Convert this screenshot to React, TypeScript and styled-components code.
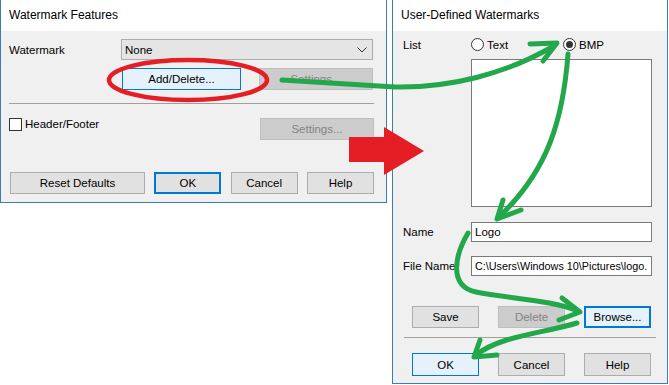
import styled, { createGlobalStyle, css } from 'styled-components'

const GlobalStyle = createGlobalStyle`
  html, body {
    margin: 0;
    padding: 0;
    background: #ffffff;
  }
  body {
    font-family: "Liberation Sans", Arial, sans-serif;
    font-size: 11.5px;
    color: #000;
  }
`

type Variant = 'normal' | 'default' | 'hover' | 'focus' | 'disabled'

const Page = styled.div`
  position: relative;
  width: 669px;
  height: 385px;
  overflow: hidden;
  display: flex;
  align-items: flex-start;
  gap: 5px;
`

const Dialog = styled.section<{ $width: number; $height: number }>`
  box-sizing: border-box;
  width: ${(p) => p.$width}px;
  height: ${(p) => p.$height}px;
  border: 1px solid #3d7db6;
  border-top: none;
  background: #f0f0f0;
  display: flex;
  flex-direction: column;
`

const TitleBar = styled.div`
  height: 31px;
  line-height: 31px;
  padding-left: 8px;
  background: #ffffff;
  font-size: 12px;
`

const Body = styled.div<{ $right: number; $left: number }>`
  flex: 1;
  display: flex;
  flex-direction: column;
  padding: 0 ${(p) => p.$right}px 0 ${(p) => p.$left}px;
`

const Row = styled.div<{ $mt: number; $ml?: number; $gap?: number }>`
  display: flex;
  align-items: center;
  margin-top: ${(p) => p.$mt}px;
  margin-left: ${(p) => p.$ml ?? 0}px;
  gap: ${(p) => p.$gap ?? 0}px;
`

const TopRow = styled(Row)`
  align-items: flex-start;
`

const SpreadRow = styled(Row)`
  justify-content: space-between;
`

const Label = styled.div<{ $w: number }>`
  width: ${(p) => p.$w}px;
  flex-shrink: 0;
  white-space: nowrap;
`

const Select = styled.div`
  box-sizing: border-box;
  width: 252px;
  height: 21px;
  border: 1px solid #adadad;
  background: #e5e5e5;
  display: flex;
  align-items: center;
  justify-content: space-between;
  padding: 0 5px 0 3px;
`

const variants = {
  normal: css`
    background: #e1e1e1;
    border: 1px solid #adadad;
    color: #000;
  `,
  default: css`
    background: #e1e1e1;
    border: 2px solid #0078d7;
    color: #000;
  `,
  focus: css`
    background: #e5f1fb;
    border: 2px solid #0078d7;
    color: #000;
  `,
  hover: css`
    background: #e5f1fb;
    border: 1px solid #0078d7;
    color: #000;
  `,
  disabled: css`
    background: #cccccc;
    border: 1px solid #bfbfbf;
    color: #838383;
  `,
}

const Button = styled.div<{ $w: number; $h?: number; $variant?: Variant }>`
  box-sizing: border-box;
  width: ${(p) => p.$w}px;
  height: ${(p) => p.$h ?? 22}px;
  display: flex;
  align-items: center;
  justify-content: center;
  flex-shrink: 0;
  ${(p) => variants[p.$variant ?? 'normal']}
`

const PushRight = styled(Button)`
  margin-left: auto;
`

const Separator = styled.div<{ $mt: number; $w: number; $ml?: number }>`
  height: 1px;
  width: ${(p) => p.$w}px;
  margin-top: ${(p) => p.$mt}px;
  margin-left: ${(p) => p.$ml ?? 0}px;
  background: #a0a0a0;
`

const CheckLabel = styled.div`
  display: flex;
  align-items: center;
  gap: 3px;
  line-height: 13px;
`

const Checkbox = styled.span`
  box-sizing: border-box;
  width: 13px;
  height: 13px;
  border: 1px solid #333333;
  background: #ffffff;
`

const RadioGroup = styled.div`
  display: flex;
  align-items: center;
  gap: 30px;
`

const RadioOption = styled.div<{ $w?: number }>`
  display: flex;
  align-items: center;
  gap: 3px;
  width: ${(p) => (p.$w ? `${p.$w}px` : 'auto')};
`

const Radio = styled.span<{ $checked?: boolean }>`
  box-sizing: border-box;
  width: 13px;
  height: 13px;
  border-radius: 50%;
  border: 1px solid #333333;
  background: #ffffff;
  display: flex;
  align-items: center;
  justify-content: center;
  &::after {
    content: '';
    width: 7px;
    height: 7px;
    border-radius: 50%;
    background: ${(p) => (p.$checked ? '#333333' : 'transparent')};
  }
`

const ListBox = styled.div`
  box-sizing: border-box;
  width: 181px;
  height: 148px;
  margin-top: 8px;
  margin-left: 68px;
  border: 1px solid #7a7a7a;
  background: #ffffff;
`

const TextInput = styled.div<{ $small?: boolean }>`
  box-sizing: border-box;
  width: 181px;
  height: 20px;
  border: 1px solid #7a7a7a;
  background: #ffffff;
  padding-left: 3px;
  line-height: 18px;
  font-size: ${(p) => (p.$small ? '10.8px' : 'inherit')};
  white-space: nowrap;
  overflow: hidden;
`

const Overlay = styled.svg`
  position: absolute;
  left: 0;
  top: 0;
  pointer-events: none;
`

const green = '#22a84b'
const red = '#e51e25'

function Annotations() {
  return (
    <Overlay width={669} height={385} viewBox="0 0 669 385">
      <ellipse cx={188} cy={80} rx={79} ry={20} fill="none" stroke={red} strokeWidth={4.5} />
      <polygon points="349,137 384,137 384,127 424,151 384,175 384,162 349,162" fill={red} />
      <g fill="none" stroke={green} strokeWidth={5} strokeLinecap="round" strokeLinejoin="round">
        <path d="M282 80 L395 87 C450 88 505 74 552 47" />
        <path d="M530 44 L557 43 L543 61" />
        <path d="M568 54 C563 120 548 170 500 216" />
        <path d="M503 200 L497 219 L521 210" />
        <path d="M468 233 C455 255 448 286 476 292 C512 299 552 300 578 311" />
        <path d="M562 298 L580 312 L559 320" />
        <path d="M577 323 C540 334 500 336 476 355" />
        <path d="M480 340 L474 357 L497 355" />
      </g>
    </Overlay>
  )
}

function Chevron() {
  return (
    <svg width="10" height="6" viewBox="0 0 10 6">
      <path d="M0.5 0.5 L5 5 L9.5 0.5" fill="none" stroke="#333" strokeWidth={1} />
    </svg>
  )
}

export default function App() {
  return (
    <>
      <GlobalStyle />
      <Page>
        <Dialog $width={387} $height={203}>
          <TitleBar>Watermark Features</TitleBar>
          <Body $left={8} $right={12}>
            <Row $mt={8}>
              <Label $w={112}>Watermark</Label>
              <Select>
                <span>None</span>
                <Chevron />
              </Select>
            </Row>
            <Row $mt={8} $ml={113} $gap={18}>
              <Button $w={119} $variant="hover">Add/Delete...</Button>
              <Button $w={114} $variant="disabled">Settings...</Button>
            </Row>
            <Separator $mt={13} $w={365} />
            <TopRow $mt={14}>
              <CheckLabel>
                <Checkbox />
                Header/Footer
              </CheckLabel>
              <PushRight $w={114} $variant="disabled">Settings...</PushRight>
            </TopRow>
            <SpreadRow $mt={32} $ml={1}>
              <Button $w={135}>Reset Defaults</Button>
              <Button $w={67} $variant="default">OK</Button>
              <Button $w={67}>Cancel</Button>
              <Button $w={67}>Help</Button>
            </SpreadRow>
          </Body>
        </Dialog>
        <Dialog $width={276} $height={384}>
          <TitleBar>User-Defined Watermarks</TitleBar>
          <Body $left={10} $right={15}>
            <Row $mt={7}>
              <Label $w={68}>List</Label>
              <RadioGroup>
                <RadioOption $w={62}>
                  <Radio />
                  Text
                </RadioOption>
                <RadioOption>
                  <Radio $checked />
                  BMP
                </RadioOption>
              </RadioGroup>
            </Row>
            <ListBox />
            <Row $mt={15}>
              <Label $w={68}>Name</Label>
              <TextInput>Logo</TextInput>
            </Row>
            <Row $mt={14}>
              <Label $w={68}>File Name</Label>
              <TextInput $small>C:\Users\Windows 10\Pictures\logo.</TextInput>
            </Row>
            <Row $mt={30} $ml={9} $gap={19}>
              <Button $w={67}>Save</Button>
              <Button $w={67} $variant="disabled">Delete</Button>
              <Button $w={67} $variant="focus">Browse...</Button>
            </Row>
            <Separator $mt={9} $w={252} $ml={1} />
            <Row $mt={15} $ml={9} $gap={19}>
              <Button $w={67} $h={23} $variant="hover">OK</Button>
              <Button $w={67} $h={23}>Cancel</Button>
              <Button $w={67} $h={23}>Help</Button>
            </Row>
          </Body>
        </Dialog>
        <Annotations />
      </Page>
    </>
  )
}
